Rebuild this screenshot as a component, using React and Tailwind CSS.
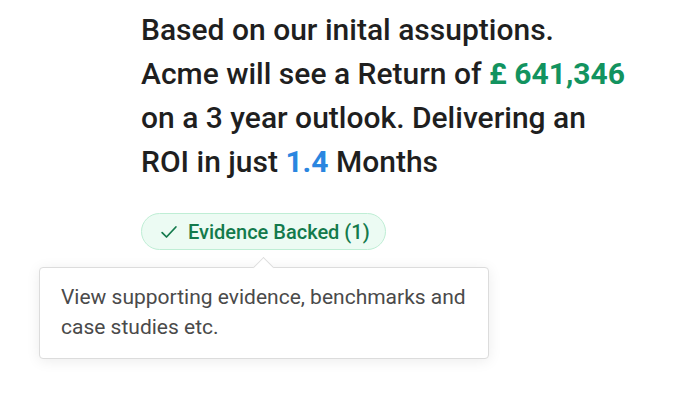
export default function App() {
  return (
    <div className="min-h-[400px] w-[686px] bg-white pl-[141px] pt-[8px]" style={{ fontFamily: "Roboto, 'Noto Sans', sans-serif" }}>
      <p className="text-[30px] font-medium leading-[44px] text-[#1f1f1f]">
        Based on our inital assuptions.
        <br />
        Acme will see a Return of <span className="font-bold text-[#12935f]">£ 641,346</span>
        <br />
        on a 3 year outlook. Delivering an
        <br />
        ROI in just <span className="font-bold text-[#2a86e0]">1.4</span> Months
      </p>
      <div className="relative mt-[29px] inline-block">
        <div className="flex h-[37px] items-center gap-[9px] rounded-full border border-[#bfeed5] bg-[#ecfbf3] pl-[17px] pr-[15px] text-[20px] font-medium text-[#137a4c]">
          <svg width="20" height="20" viewBox="0 0 16 16" fill="none" stroke="#137a4c" strokeWidth="1.4" strokeLinecap="round" strokeLinejoin="round">
            <path d="M2.5 8.5l3.5 3.5 7.5-8" />
          </svg>
          <span>Evidence Backed (1)</span>
        </div>
        <div className="absolute left-[-102px] top-[54px] w-[450px] rounded-[4px] border border-[#dcdcdc] bg-white px-[21px] pb-[16px] pt-[14px] text-[21px] leading-[30px] text-[#4a4a4a] shadow-[0_2px_14px_rgba(0,0,0,0.08)]">
          <div className="absolute left-[216px] top-[-8px] h-[15px] w-[15px] rotate-45 border-l border-t border-[#dcdcdc] bg-white" />
          <p className="relative">
            View supporting evidence, benchmarks and
            <br />
            case studies etc.
          </p>
        </div>
      </div>
    </div>
  );
}
